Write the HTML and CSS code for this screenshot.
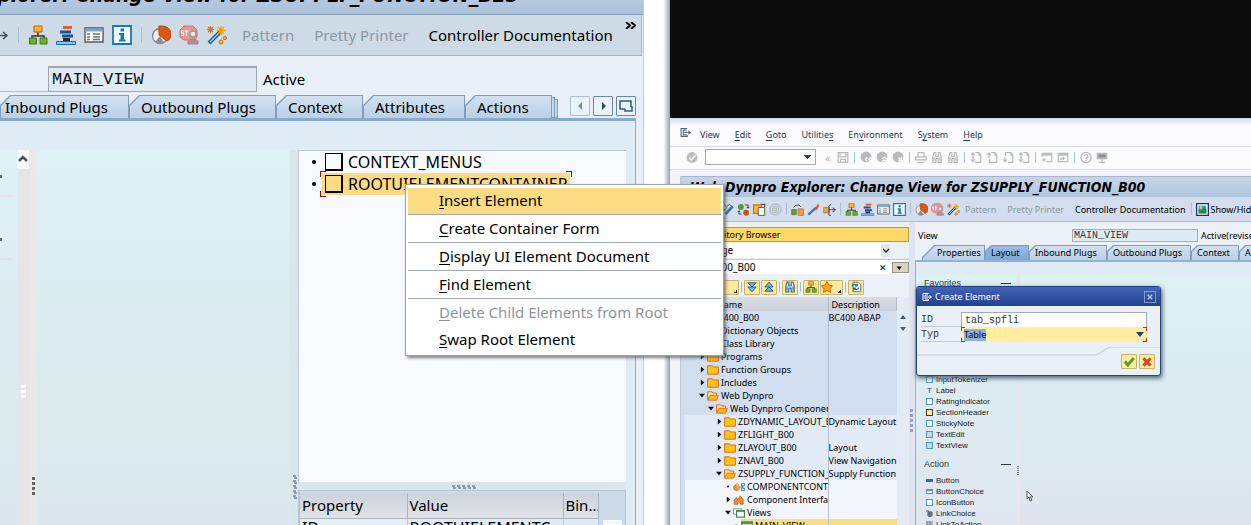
FILE: index.html
```html
<!DOCTYPE html>
<html lang="en">
<head>
<meta charset="utf-8">
<title>Web Dynpro Explorer</title>
<link rel="stylesheet" href="styles.css">
</head>
<body>
<svg class="sprite" aria-hidden="true">
  <symbol id="i-move" viewBox="0 0 20 20"><path d="M2 4h7v4M9 13v4H2M3 10.500h14M14 7l4 3.500-4 3.500M6 2l-3 3M6 18l-3-3" fill="none" stroke="#4c4f52" stroke-width="1.600"/></symbol>
  <symbol id="i-tree" viewBox="0 0 20 20"><path d="M10 6v5M4 14v-3h12v3" fill="none" stroke="#333" stroke-width="1.500"/><path d="M6 1h8v6H6z" fill="#ffb52e" stroke="#c2550f"/><path d="M1.500 13h7v6h-7zM12 13h7v6h-7z" fill="#6fae2f" stroke="#3c7a1c"/></symbol>
  <symbol id="i-steps" viewBox="0 0 20 20"><path d="M7 1h9v3H7z" fill="#df6524"/><path d="M4 5.500h11v3H4zM6 9.500h11v3H6z" fill="#1f4f96"/><path d="M7 13h7v3H7z" fill="#222b44"/><path d="M.5 16.500h19v3H.5z" fill="#8ec5e8" stroke="#1b6aa8"/></symbol>
  <symbol id="i-list" viewBox="0 0 20 20"><path d="M1 3h18v14H1z" fill="#fff" stroke="#55585a" stroke-width="1.400"/><path d="M1.500 3.500h17v3h-17z" fill="#78a7cf"/><path d="M3 9h3M3 12h3M3 14.500h3M9 9h7M9 12h7M9 14.500h7" stroke="#6e7276" stroke-width="1.300"/></symbol>
  <symbol id="i-info" viewBox="0 0 20 20"><path d="M1 1h18v18H1z" fill="#fff" stroke="#0a7cc0" stroke-width="1.800"/><path d="M8.500 3.500h3.500v3H8.500zM7 8h5v6.500h1.500V16.500H7v-2h1.500V10H7z" fill="#0a7cc0"/></symbol>
  <symbol id="i-pie" viewBox="0 0 20 20"><circle cx="9" cy="11" r="7.500" fill="#f0f0f0" stroke="#858585" stroke-width="1.300"/><path d="M9 11l-5 6a8 8 0 0 0 9 1z" fill="#8d8d8d"/><path d="M8 10V1q12-1 12 9 0 4-4 6z" fill="#df5515" stroke="#b04a17"/></symbol>
  <symbol id="i-stop" viewBox="0 0 20 20"><path d="M5 1h9l4 4v7l-4 3H5l-4-3V5z" fill="#e79494" stroke="#d46b6b"/><path d="M4.500 6H2.500v2h2v2.500h-2M5.500 6h4M7.500 6v5" stroke="#fff" stroke-width="1.200" fill="none"/><circle cx="14" cy="9" r="3" fill="#e7e7e7" stroke="#999" stroke-width="1.500"/><path d="M9 19v-3q5-4 10 0v3z" fill="#b98e8e" stroke="#9d8787"/></symbol>
  <symbol id="i-wand" viewBox="0 0 20 20"><path d="M2 18L13 7" stroke="#245f8e" stroke-width="4"/><path d="M3 17L12 8" stroke="#8fc8ec" stroke-width="1.500"/><path d="M1 2l5 5M6 2L1 7M3.500 1v7M0 4.500h7" stroke="#df6a1b" stroke-width="1.200"/><path d="M14 1v9M10 5.500h9M11 2l6 7M17 2l-6 7" stroke="#f0a21c" stroke-width="1.400"/><circle cx="14" cy="17" r="2" fill="#ffb31f" stroke="#ce7413"/><circle cx="18" cy="13" r="1.600" fill="#ffb31f" stroke="#ce7413"/></symbol>
  <symbol id="i-edit" viewBox="0 0 20 20"><path d="M1 5l4-3 4 5-3 4zM9 5l4-3 3 3" fill="none" stroke="#555" stroke-width="1.500"/><path d="M7 17L18 5" stroke="#2c78ad" stroke-width="4"/></symbol>
  <symbol id="i-swap" viewBox="0 0 20 20"><circle cx="6" cy="6" r="4.500" fill="#4e9a2c"/><circle cx="14" cy="15" r="4.500" fill="#d64a20"/><path d="M12 3h5v5M15 6l2 2 2-2M7 17H3v-5M1 14l2-2 2 2" stroke="#444" stroke-width="1.500" fill="none"/></symbol>
  <symbol id="i-copy" viewBox="0 0 20 20"><path d="M1 3h12v13H1z" fill="#ffbe31" stroke="#d06b18" stroke-width="2"/><path d="M8 7h10v12H8z" fill="#fff" stroke="#555" stroke-width="1.500"/><path d="M12 2h6v4" fill="none" stroke="#555" stroke-width="2"/></symbol>
  <symbol id="i-spiral" viewBox="0 0 20 20"><g fill="none" stroke="#a9adb3" stroke-width="1.500"><circle cx="10" cy="10" r="8.500"/><circle cx="10" cy="10" r="5"/><circle cx="10" cy="10" r="2"/></g></symbol>
  <symbol id="i-boxes" viewBox="0 0 20 20"><path d="M1 10h7v8H1z" fill="#5ea032" stroke="#397322"/><path d="M11 9h8v10h-8z" fill="#f4a13b" stroke="#b6531d"/><path d="M4 7q2-5 8-4l3 3" fill="none" stroke="#444" stroke-width="1.500"/></symbol>
  <symbol id="i-match" viewBox="0 0 20 20"><path d="M2 18L14 7" stroke="#3b78a8" stroke-width="3.500"/><path d="M12 9l5-8 2 3-4 7z" fill="#e7541b"/></symbol>
  <symbol id="i-split" viewBox="0 0 20 20"><path d="M1 7h9v8H1z" fill="#f8a234" stroke="#b85a1c"/><path d="M8 10.500h10M15 7l4 3.500-4 3.500M12 2l-3 3v13l3 2" fill="none" stroke="#555" stroke-width="1.600"/></symbol>
  <symbol id="i-exit" viewBox="0 0 20 20"><path d="M13 3H2v14h11v-3M6 6h6M6 6v8h6M8 10h10M15 7l4 3-4 3" fill="none" stroke="currentColor" stroke-width="2"/></symbol>
  <symbol id="i-ok" viewBox="0 0 20 20"><circle cx="10" cy="10" r="9" fill="currentColor"/><path d="M5 10l4 4 7-8" fill="none" stroke="#fff" stroke-width="2.500"/></symbol>
  <symbol id="i-save" viewBox="0 0 20 20"><path d="M2 2h16v16H2zM5 2v7h10V2M6 18v-5h8v5" fill="none" stroke="currentColor" stroke-width="2"/></symbol>
  <symbol id="i-back" viewBox="0 0 20 20"><circle cx="10" cy="9" r="9" fill="currentColor"/><path d="M12 10l-3 3 3 3M18 10l-3 3 3 3" fill="none" stroke="#fff" stroke-width="2"/></symbol>
  <symbol id="i-up" viewBox="0 0 20 20"><circle cx="10" cy="9" r="9" fill="currentColor"/><path d="M10 12l4-3 4 3M10 17l4-3 4 3" fill="none" stroke="#fff" stroke-width="2"/></symbol>
  <symbol id="i-cancel" viewBox="0 0 20 20"><circle cx="10" cy="9" r="9" fill="currentColor"/><path d="M11 10l6 7M17 10l-6 7" stroke="#fff" stroke-width="2.500"/></symbol>
  <symbol id="i-print" viewBox="0 0 20 20"><path d="M5 9V2h10v7M1 9h18v5H1zM4 18h12" fill="none" stroke="currentColor" stroke-width="2"/></symbol>
  <symbol id="i-find" viewBox="0 0 20 20"><path d="M3 18V9l2-7h3v6h4V2h3l2 7v9h-5v-6H8v6z" fill="#fff" stroke="currentColor" stroke-width="2"/><path d="M5 9v7M15 9v7" stroke="currentColor" stroke-width="2"/></symbol>
  <symbol id="i-page" viewBox="0 0 20 20"><path d="M9 2h6l3 4v12H8M15 2v4h3M5 3v12M2 6l3-4 3 4M2 13l3 4 3-4" fill="none" stroke="currentColor" stroke-width="2"/></symbol>
  <symbol id="i-pageup" viewBox="0 0 20 20"><path d="M9 2h6l3 4v12H6v-6M15 2v4h3M5 3v8M2 6l3-4 3 4" fill="none" stroke="currentColor" stroke-width="2"/></symbol>
  <symbol id="i-pagedn" viewBox="0 0 20 20"><path d="M6 8V2h9l3 4v12h-8M15 2v4h3M5 9v8M2 13l3 4 3-4" fill="none" stroke="currentColor" stroke-width="2"/></symbol>
  <symbol id="i-window" viewBox="0 0 20 20"><path d="M2 9V3h16v14H9" fill="none" stroke="currentColor" stroke-width="2"/><path d="M2 3h16v4H2z" fill="currentColor"/><path d="M2 14h6M5 11v6" stroke="currentColor" stroke-width="2"/></symbol>
  <symbol id="i-short" viewBox="0 0 20 20"><path d="M2 3h16v14H2z" fill="none" stroke="currentColor" stroke-width="2"/><path d="M2 3h16v4H2z" fill="currentColor"/><path d="M6 15q0-4 6-4M9 9l3 2-2 3" fill="none" stroke="currentColor" stroke-width="2"/></symbol>
  <symbol id="i-help" viewBox="0 0 20 20"><circle cx="10" cy="10" r="8.500" fill="none" stroke="currentColor" stroke-width="2"/><path d="M7 8q0-3 3-3t3 3q0 2-3 3v2M10 14v2" fill="none" stroke="currentColor" stroke-width="2"/></symbol>
  <symbol id="i-monitor" viewBox="0 0 20 20"><path d="M1 2h18v11H1z" fill="currentColor"/><path d="M4 5h12v5H4z" fill="#8b8f9c"/><path d="M10 13v4M5 18h10" stroke="currentColor" stroke-width="2"/></symbol>
  <symbol id="i-folder" viewBox="0 0 20 16"><path d="M1 1h8l2 2h8v12H1z" fill="#ffc50f" stroke="#e4651b" stroke-width="1.600"/></symbol>
  <symbol id="i-open" viewBox="0 0 20 16"><path d="M1 14V1h7l2 2h6v4" fill="#ffe08a" stroke="#e4651b" stroke-width="1.600"/><path d="M1 15l4-8h14l-3 8z" fill="#ffb91b" stroke="#e4651b" stroke-width="1.400"/></symbol>
  <symbol id="i-ctrl" viewBox="0 0 20 16"><circle cx="6" cy="9" r="5" fill="#f38d2e" stroke="#c65316"/><path d="M4 4l4-3 2 3v10" fill="#f7b260"/><path d="M14 2h5v4h-5zM14 10h5v4h-5zM12 8h4M16 6v4" stroke="#3878b0" stroke-width="1.600" fill="none"/></symbol>
  <symbol id="i-intf" viewBox="0 0 20 16"><path d="M2 15V8l4-4 2 4 4-7 5 6v8h-5v-4H8v4z" fill="#f38d2e" stroke="#c65316" stroke-width="1.300"/></symbol>
  <symbol id="i-views" viewBox="0 0 20 16"><path d="M1 1h13v9H1z" fill="#fff" stroke="#7c8b7b" stroke-width="1.500"/><path d="M6 4h13v11H6z" fill="#fff" stroke="#3c9145" stroke-width="2"/><path d="M6 5h13" stroke="#3c9145" stroke-width="2"/></symbol>
  <symbol id="i-view" viewBox="0 0 20 16"><path d="M1 1h18v15H1z" fill="#eef7e6" stroke="#4a9a3b" stroke-width="2"/><path d="M1 3h18" stroke="#4a9a3b" stroke-width="4"/><path d="M6 8h3M12 8h4M6 12h3M12 12h4" stroke="#4a9a3b" stroke-width="2"/></symbol>
  <symbol id="i-down2" viewBox="0 0 20 20"><path d="M3 3h14l-7 7zM3 10h14l-7 8z" fill="#72b4dc" stroke="#1a588b" stroke-width="1.500"/></symbol>
  <symbol id="i-up2" viewBox="0 0 20 20"><path d="M3 10h14l-7-8zM3 17h14l-7-7z" fill="#72b4dc" stroke="#1a588b" stroke-width="1.500"/></symbol>
  <symbol id="i-star" viewBox="0 0 20 20"><path d="M10 1l3 6 6 1-4 5 1 6-6-3-6 3 1-6-4-5 6-1z" fill="#ffab19" stroke="#d0540f" stroke-width="1.500"/></symbol>
  <symbol id="i-refresh" viewBox="0 0 20 20"><path d="M5 2h9l4 4v12H5z" fill="#fff" stroke="#55606a" stroke-width="1.500"/><path d="M3 9q4-6 9-1M12 4v4H8M15 11q-4 6-9 1M6 16v-4h4" fill="none" stroke="#1f6da6" stroke-width="2"/></symbol>
  <symbol id="i-chart" viewBox="0 0 20 20"><path d="M1 1h18v18H1z" fill="#fff" stroke="#1b3468" stroke-width="2"/><path d="M4 4h12v12H4z" fill="#3aa0c8"/><path d="M4 16V9l4 3 4-6 4 4v6z" fill="#2b8a3e"/><path d="M6 5h3v4H6z" fill="#f2d43c"/></symbol>
</svg>

<div class="desktop">
  <section class="win win-a">
    <div class="a-frame">
      <h1 class="a-title"><span>Explorer: Change View for ZSUPPLY_FUNCTION_B23</span></h1>
      <div class="a-tools">
        <svg class="ic"><use href="#i-move"/></svg><i class="sep"></i>
        <svg class="ic"><use href="#i-tree"/></svg>
        <svg class="ic"><use href="#i-steps"/></svg>
        <svg class="ic"><use href="#i-list"/></svg>
        <svg class="ic"><use href="#i-info"/></svg><i class="sep"></i>
        <svg class="ic"><use href="#i-pie"/></svg>
        <svg class="ic"><use href="#i-stop"/></svg>
        <svg class="ic"><use href="#i-wand"/></svg>
        <div class="a-links">
          <button class="link" disabled>Pattern</button>
          <button class="link" disabled>Pretty Printer</button>
          <button class="link">Controller Documentation</button>
        </div>
        <button class="more" aria-label="More"><svg viewBox="0 0 11 7"><path d="M1 0l4 3.500L1 7M6 0l4 3.500L6 7" fill="none" stroke="#000" stroke-width="2"/></svg></button>
      </div>
      <div class="a-field">
        <span class="rule"></span>
        <input class="mono" type="text" value="MAIN_VIEW" aria-label="View" readonly>
        <span>Active</span>
      </div>
      <div class="a-tabs">
        <button class="tab t1"><span>Inbound Plugs</span></button>
        <button class="tab t2"><span>Outbound Plugs</span></button>
        <button class="tab t3"><span>Context</span></button>
        <button class="tab t4"><span>Attributes</span></button>
        <button class="tab t5"><span>Actions</span></button>
        <i class="stack"></i><i class="stack"></i>
        <div class="navs">
          <button class="nav dim" aria-label="Previous"><svg viewBox="0 0 18 18"><path d="M11 5v8L7 9z" fill="#6f94bb"/></svg></button>
          <button class="nav" aria-label="Next"><svg viewBox="0 0 18 18"><path d="M8 5v8l4-4z" fill="#214c77"/></svg></button>
          <button class="nav" aria-label="List"><svg viewBox="0 0 18 18"><path d="M8 12H3V4h11v6M8 12v2h5M10 14h5V9" fill="none" stroke="#2d5c88" stroke-width="1.500"/></svg></button>
        </div>
      </div>
      <div class="a-panel">
        <div class="a-left"><i class="frag"></i><i class="frag"></i></div>
        <div class="a-scroll"><svg viewBox="0 0 12 19"><path d="M0 0h12v19H0z" fill="#f8f8f8"/><path d="M2 11l4-4 4 4" fill="none" stroke="#505355" stroke-width="2.500"/></svg><i class="grip"></i></div>
        <div class="a-strip"><i class="dots"></i></div>
        <div class="a-canvas"></div>
        <div class="a-split"><svg viewBox="0 0 4 25"><path d="M0 0h3v2h1v2H1V2H0zM0 5h3v2h1v2H1V7H0zM0 10h3v2h1v2H1v-2H0zM0 15h3v2h1v2H1v-2H0zM0 20h3v2h1v2H1v-2H0z" fill="#8d9aa8"/></svg></div>
        <div class="a-right">
          <ul class="ui-tree">
            <li><i class="bullet"></i><span class="node"><i class="box"></i>CONTEXT_MENUS</span></li>
            <li><i class="bullet"></i><span class="node on"><i class="box"></i>ROOTUIELEMENTCONTAINER</span></li>
          </ul>
          <div class="h-split"><svg viewBox="0 0 25 4"><path d="M0 0h3v2h1v2H1V2H0zM5 0h3v2h1v2H6V2H5zM10 0h3v2h1v2h-3V2h-1zM15 0h3v2h1v2h-3V2h-1zM20 0h3v2h1v2h-3V2h-1z" fill="#8d9aa8"/></svg></div>
          <div class="props">
            <table>
              <colgroup><col class="c-prop"><col class="c-val"><col></colgroup>
              <thead><tr><th>Property</th><th>Value</th><th>Bin...</th></tr></thead>
              <tbody><tr><td>ID</td><td>ROOTUIELEMENTC</td><td></td></tr></tbody>
            </table>
            <i class="thumb"></i>
          </div>
        </div>
      </div>
    </div>
  </section>

  <section class="win win-b">
    <div class="void"></div>
    <div class="b-frame">
      <nav class="b-menu">
        <svg class="ic m-ic"><use href="#i-exit"/></svg>
        <a href="#">View</a><a href="#"><u>E</u>dit</a><a href="#"><u>G</u>oto</a><a href="#">Utilitie<u>s</u></a><a href="#">En<u>v</u>ironment</a><a href="#">S<u>y</u>stem</a><a href="#"><u>H</u>elp</a>
      </nav>
      <div class="b-cmd">
        <svg class="ic"><use href="#i-ok"/></svg>
        <select aria-label="Command"><option></option></select>
        <span class="laquo">«</span>
        <svg class="ic"><use href="#i-save"/></svg><i class="sep"></i>
        <svg class="ic"><use href="#i-back"/></svg><svg class="ic"><use href="#i-up"/></svg><svg class="ic"><use href="#i-cancel"/></svg><i class="sep"></i>
        <svg class="ic"><use href="#i-print"/></svg><svg class="ic"><use href="#i-find"/></svg><svg class="ic"><use href="#i-find"/></svg><i class="sep"></i>
        <svg class="ic"><use href="#i-page"/></svg><svg class="ic"><use href="#i-pageup"/></svg><svg class="ic"><use href="#i-pagedn"/></svg><svg class="ic"><use href="#i-page"/></svg><i class="sep"></i>
        <svg class="ic"><use href="#i-window"/></svg><svg class="ic"><use href="#i-short"/></svg><i class="sep"></i>
        <svg class="ic"><use href="#i-help"/></svg><svg class="ic"><use href="#i-monitor"/></svg>
      </div>
      <div class="b-main">
        <h2 class="b-title">Web Dynpro Explorer: Change View for ZSUPPLY_FUNCTION_B00</h2>
        <div class="b-tools">
          <svg class="ic"><use href="#i-edit"/></svg><svg class="ic"><use href="#i-swap"/></svg><svg class="ic"><use href="#i-copy"/></svg><svg class="ic"><use href="#i-spiral"/></svg><i class="sep"></i>
          <svg class="ic"><use href="#i-boxes"/></svg><svg class="ic"><use href="#i-match"/></svg><svg class="ic"><use href="#i-split"/></svg><i class="sep"></i>
          <svg class="ic"><use href="#i-tree"/></svg><svg class="ic"><use href="#i-steps"/></svg><svg class="ic"><use href="#i-list"/></svg><svg class="ic"><use href="#i-info"/></svg><i class="sep"></i>
          <svg class="ic"><use href="#i-pie"/></svg><svg class="ic"><use href="#i-stop"/></svg><svg class="ic"><use href="#i-wand"/></svg>
          <div class="b-links">
            <button class="link" disabled>Pattern</button>
            <button class="link" disabled>Pretty Printer</button>
            <button class="link">Controller Documentation</button>
          </div>
          <i class="sep"></i>
          <button class="link show"><svg class="ic"><use href="#i-chart"/></svg>Show/Hide</button>
        </div>
        <div class="b-body">
          <aside class="repo">
            <div class="repo-head">Repository Browser</div>
            <div class="repo-kind"><select aria-label="Object type"><option>Package</option></select><svg viewBox="0 0 9 13"><path d="M0 0h9v13H0z" fill="#e1e6ed"/><path d="M2 5l3 3 3-3" fill="none" stroke="#222" stroke-width="1.300"/></svg></div>
            <div class="repo-name"><input type="text" value="BC400_B00" aria-label="Object"><span class="clr">✕</span><button class="drop" aria-label="History"><svg viewBox="0 0 17 11"><path d="M4 4h6l-3 4z" fill="#111"/></svg></button></div>
            <div class="repo-tools">
              <button class="yb wide" aria-label="Navigate"><i class="corner"></i></button><i class="sep"></i>
              <button class="yb" aria-label="Expand"><svg class="ic"><use href="#i-down2"/></svg></button>
              <button class="yb" aria-label="Collapse"><svg class="ic"><use href="#i-up2"/></svg></button><i class="sep"></i>
              <button class="yb blue" aria-label="Find"><svg class="ic"><use href="#i-find"/></svg></button><i class="sep"></i>
              <button class="yb" aria-label="Hierarchy"><svg class="ic"><use href="#i-tree"/></svg></button>
              <button class="yb star" aria-label="Favorites"><svg class="ic"><use href="#i-star"/></svg><i class="corner"></i></button><i class="sep"></i>
              <button class="yb" aria-label="Refresh"><svg class="ic"><use href="#i-refresh"/></svg></button>
            </div>
            <div class="repo-tree">
              <table>
                <colgroup><col class="c-name"><col></colgroup>
                <thead><tr><th>Object Name</th><th>Description</th></tr></thead>
                <tbody>
                  <tr class="l0"><td><div><i class="tw dn"></i><svg class="fd"><use href="#i-open"/></svg>BC400_B00</div></td><td>BC400 ABAP</td></tr>
                  <tr class="l1"><td><div><i class="tw"></i><svg class="fd"><use href="#i-folder"/></svg>Dictionary Objects</div></td><td></td></tr>
                  <tr class="l1"><td><div><i class="tw"></i><svg class="fd"><use href="#i-folder"/></svg>Class Library</div></td><td></td></tr>
                  <tr class="l1"><td><div><i class="tw"></i><svg class="fd"><use href="#i-folder"/></svg>Programs</div></td><td></td></tr>
                  <tr class="l1"><td><div><i class="tw"></i><svg class="fd"><use href="#i-folder"/></svg>Function Groups</div></td><td></td></tr>
                  <tr class="l1"><td><div><i class="tw"></i><svg class="fd"><use href="#i-folder"/></svg>Includes</div></td><td></td></tr>
                  <tr class="l1"><td><div><i class="tw dn"></i><svg class="fd"><use href="#i-open"/></svg>Web Dynpro</div></td><td></td></tr>
                  <tr class="l2"><td><div><i class="tw dn"></i><svg class="fd"><use href="#i-open"/></svg>Web Dynpro Components</div></td><td></td></tr>
                  <tr class="l3"><td><div><i class="tw"></i><svg class="fd"><use href="#i-folder"/></svg>ZDYNAMIC_LAYOUT_B00</div></td><td>Dynamic Layout</td></tr>
                  <tr class="l3"><td><div><i class="tw"></i><svg class="fd"><use href="#i-folder"/></svg>ZFLIGHT_B00</div></td><td></td></tr>
                  <tr class="l3"><td><div><i class="tw"></i><svg class="fd"><use href="#i-folder"/></svg>ZLAYOUT_B00</div></td><td>Layout</td></tr>
                  <tr class="l3"><td><div><i class="tw"></i><svg class="fd"><use href="#i-folder"/></svg>ZNAVI_B00</div></td><td>View Navigation</td></tr>
                  <tr class="l3"><td><div><i class="tw dn"></i><svg class="fd"><use href="#i-open"/></svg>ZSUPPLY_FUNCTION_B00</div></td><td>Supply Function</td></tr>
                  <tr class="l4"><td><div><i class="tw pt"></i><svg class="fd"><use href="#i-ctrl"/></svg>COMPONENTCONTROLLER</div></td><td></td></tr>
                  <tr class="l4"><td><div><i class="tw"></i><svg class="fd"><use href="#i-intf"/></svg>Component Interface</div></td><td></td></tr>
                  <tr class="l4"><td><div><i class="tw dn"></i><svg class="fd"><use href="#i-views"/></svg>Views</div></td><td></td></tr>
                  <tr class="l5"><td><div><i class="tw pt"></i><span class="pick"><svg class="fd"><use href="#i-view"/></svg>MAIN_VIEW</span></div></td><td class="pick"></td></tr>
                </tbody>
              </table>
              <div class="b-scroll"><svg viewBox="0 0 12 26"><path d="M3 9h6L6 5zM3 17h6l-3 4z" fill="#4b5b70"/></svg></div>
            </div>
          </aside>
          <div class="b-split"><svg viewBox="0 0 4 25"><path d="M0 0h3v3H0zM0 5h3v3H0zM0 10h3v3H0zM0 15h3v3H0zM0 20h3v3H0z" fill="#97a1b3"/></svg></div>
          <div class="editor">
            <div class="b-field"><label for="bview">View</label><input id="bview" class="mono" type="text" value="MAIN_VIEW" readonly><span>Active(revised)</span></div>
            <div class="b-tabs">
              <button class="tab u1"><span>Properties</span></button>
              <button class="tab u2 sel"><span>Layout</span></button>
              <button class="tab u3"><span>Inbound Plugs</span></button>
              <button class="tab u4"><span>Outbound Plugs</span></button>
              <button class="tab u5"><span>Context</span></button>
              <button class="tab u6"><span>Attributes</span></button>
            </div>
            <div class="b-panel">
              <div class="palette">
                <h3>Favorites<i></i></h3>
                <ul class="rest">
                  <li><i class="sq"></i>InputTokenizer</li>
                  <li><i class="gl">T</i>Label</li>
                  <li><i class="sq"></i>RatingIndicator</li>
                  <li><i class="sq sec"></i>SectionHeader</li>
                  <li><i class="sq"></i>StickyNote</li>
                  <li><i class="sq tx"></i>TextEdit</li>
                  <li><i class="sq tx"></i>TextView</li>
                </ul>
                <h3>Action<i></i></h3>
                <ul>
                  <li><i class="bar"></i>Button</li>
                  <li><i class="sq half"></i>ButtonChoice</li>
                  <li><i class="sq"></i>IconButton</li>
                  <li><svg class="lk" viewBox="0 0 7 7"><path d="M0 1h3M2 2h4v4H2zM2 4h4M4 2v5" fill="none" stroke="#3f4663"/></svg>LinkChoice</li>
                  <li><svg class="lk" viewBox="0 0 7 7"><path d="M0 1h7M0 3h7M1 0v4M4 0v4" fill="none" stroke="#7880a0"/></svg>LinkToAction</li>
                </ul>
              </div>
              <div class="p-split"><i></i></div>
              <div class="b-canvas"></div>
            </div>
          </div>
        </div>
      </div>
    </div>
  </section>

  <div class="ctx" role="menu">
    <button class="hot" role="menuitem"><u>I</u>nsert Element</button>
    <button role="menuitem"><u>C</u>reate Container Form</button>
    <button role="menuitem"><u>D</u>isplay UI Element Document</button>
    <button role="menuitem"><u>F</u>ind Element</button>
    <button class="plain" role="menuitem" disabled><u>D</u>elete Child Elements from Root</button>
    <button class="plain" role="menuitem"><u>S</u>wap Root Element</button>
  </div>

  <form class="dlg" role="dialog" aria-label="Create Element">
    <header><svg class="ic"><use href="#i-exit"/></svg><span>Create Element</span><button type="button" class="x" aria-label="Close"><svg viewBox="0 0 11 11"><path d="M3 3l5 5M8 3L3 8" stroke="#b9cbf2" stroke-width="1.500"/></svg></button></header>
    <div class="row"><label for="did">ID</label><input id="did" class="mono" type="text" value="tab_spfli"></div>
    <div class="row typ"><label for="dtyp">Typ</label><button type="button" id="dtyp" class="combo"><mark>Table</mark><svg viewBox="0 0 8 5"><path d="M0 0h8L4 5z" fill="#1f3f66"/></svg></button></div>
    <div class="foot">
      <svg class="curve" viewBox="0 0 242 10" preserveAspectRatio="none"><path d="M0 8h176q4 0 9-4t11-4h46" fill="none" stroke="#c3cbd6"/></svg>
      <div class="btns">
        <button type="button" class="yb" aria-label="Confirm"><svg class="ic" viewBox="0 0 20 20"><path d="M2 11l3-3 3 4 8-9 3 2L8 18z" fill="#58a632" stroke="#35761d"/></svg></button>
        <button type="button" class="yb" aria-label="Cancel"><svg class="ic" viewBox="0 0 20 20"><path d="M4 4l12 12M16 4L4 16" stroke="#d34a1c" stroke-width="5"/></svg></button>
      </div>
    </div>
  </form>

  <svg class="pointer" viewBox="0 0 8 12"><path d="M1 1v8l2-2 1 4 2-1-2-3h3z" fill="#fff" stroke="#555"/></svg>
</div>
</body>
</html>
```

FILE: styles.css
```css
* { box-sizing: border-box; }
body { margin: 0; height: 100vh; overflow: hidden; font: 15px/20px "Noto Sans", "Open Sans", sans-serif; color: #000; }
button, input, select { font: inherit; color: inherit; margin: 0; border: 0; padding: 0; background: none; border-radius: 0; }
button { text-align: left; white-space: nowrap; }
h1, h2, h3, ul { margin: 0; padding: 0; list-style: none; }
table { border-collapse: collapse; table-layout: fixed; width: 100%; }
th, td { padding: 0; text-align: left; font-weight: normal; white-space: nowrap; overflow: hidden; }
svg { display: block; flex: none; }
.sprite { display: none; }
.mono { font-family: "Liberation Mono", monospace; }

.desktop { position: relative; display: grid; grid-template-columns: 670fr 581fr; height: 100%; }
.win { min-width: 0; min-height: 0; overflow: hidden; }

/* left window */
.win-a { background: linear-gradient(to right, #fff 0 99%, #9aa2ab 100%); padding-right: 26px; }
.a-frame { display: flex; flex-direction: column; height: 100%; background: #e8eff7; border-right: 1px solid #c3cad3; }
.a-title { display: flex; justify-content: flex-end; align-items: flex-end; height: 15px; padding: 0 124px 6px 0; overflow: hidden; background: linear-gradient(#b3c9de, #a9c2d9); border-bottom: 1px solid #8ba3bc; font: italic bold 21px/26px "DejaVu Sans Condensed", "DejaVu Sans", sans-serif; white-space: nowrap; }
.a-tools { display: flex; align-items: center; gap: 8px; height: 41px; margin-right: 1px; background: #cedbe6; border: solid #a5b6c8; border-width: 0 1px 1px 0; }
.a-tools > .ic { width: 20px; height: 20px; }
.a-tools > .ic:first-child { margin-left: -11px; }
.sep { flex: none; width: 1px; height: 16px; background: #a9bdd2; }
.a-tools .sep { margin: 0 1px; }
.a-links { display: flex; gap: 20px; margin-left: 7px; }
.link:disabled { color: #8c98a4; }
.more { align-self: flex-start; margin: 7px 5px 0 auto; }
.more svg { width: 11px; height: 7px; }
.a-field { display: flex; align-items: flex-end; height: 36px; flex: none; }
.a-field .rule { width: 48px; border-bottom: 1px solid #b6bfc9; }
.a-field input { width: 209px; height: 26px; margin-right: 6px; padding-left: 3px; background: #dfeaf4; border: 1px solid #9fa7b0; border-top-width: 2px; font-size: 17px; color: #111; }
.a-field span:last-child { line-height: 25px; }
.a-tabs { display: flex; align-items: flex-end; flex: none; height: 26px; }
.tab { --cut: 10px; background: #7f9dbd; padding: 1px 1px 0 1px; clip-path: polygon(var(--cut) 0, 100% 0, 100% 100%, 0 100%, 0 var(--cut)); }
.tab span { display: block; padding-left: 11px; background: linear-gradient(#d2e1f0, #b9d0e6); clip-path: polygon(var(--cut) 0, 100% 0, 100% 100%, 0 100%, 0 var(--cut)); }
.a-tabs .tab { height: 23px; }
.a-tabs .tab span { height: 22px; line-height: 23px; }
.t1 { width: 129px; }
.a-tabs .t1 span { padding-left: 4px; }
.t2 { width: 147px; }
.t3 { width: 87px; }
.t4 { width: 102px; }
.t5 { width: 87px; }
.stack { width: 3px; height: 21px; background: #c5d8ea; border: 1px solid #7f9dbd; border-left: 0; }
.stack + .stack { height: 19px; }
.navs { display: flex; gap: 3px; margin: 0 7px 2px auto; }
.nav { width: 20px; height: 20px; border: 1px solid #6889ad; background: #eaf2fa; border-radius: 1px; }
.nav.dim { border-color: #a9bfd6; }
.a-panel { display: flex; flex: 1; min-height: 0; margin-right: 7px; padding: 29px 9px 0 0; border-top: 3px solid #86abd3; border-right: 1px solid #86abd3; background: #dfebf5; }
.a-left, .a-canvas { background: linear-gradient(#dcf1f4, #dceaee 70%, #dbe7ec); }
.a-left { width: 17px; padding-top: 25px; }
.frag { display: block; width: 12px; height: 22px; margin-bottom: 41px; border-bottom: 2px solid #e5e3e5; background: linear-gradient(#5f6a74, #5f6a74) 0 0 / 2px 3px no-repeat; }
.a-scroll { display: flex; flex-direction: column; width: 13px; background: #e5e5e5; }
.a-scroll svg { width: 12px; height: 19px; }
.grip { width: 5px; height: 13px; margin: 216px auto 0; background: repeating-linear-gradient(#fff 0 3px, transparent 3px 5px); }
.a-strip { width: 7px; background: #e9e9e9; padding: 327px 2px 0; }
.dots { display: block; width: 3px; height: 18px; background: repeating-linear-gradient(#666 0 3px, transparent 3px 5px); }
.a-canvas { flex: 1; }
.a-split { width: 8px; background: #dae5ec; padding: 325px 0 0 3px; }
.a-split svg, .b-split svg { width: 4px; height: 25px; }
.a-right { display: flex; flex-direction: column; width: 328px; }
.ui-tree { height: 332px; background: #f7faff; border: solid #bbc8d6; border-width: 1px 0 0 1px; flex: none; font-size: 16px; }
.ui-tree li { display: flex; align-items: center; height: 22px; }
.bullet { width: 4px; height: 4px; margin: 0 6px 0 13px; border-radius: 50%; background: #000; }
.node { position: relative; display: flex; align-items: center; gap: 5px; height: 22px; padding: 0 2px 0 3px; }
.node.on { background: #fcdc82; }
.node.on::before { content: ""; position: absolute; inset: -2px; background:
  linear-gradient(#a00 0 0) 0 0 / 6px 1px, linear-gradient(#a00 0 0) 0 0 / 1px 6px,
  linear-gradient(#a00 0 0) 100% 0 / 6px 1px, linear-gradient(#a00 0 0) 100% 0 / 1px 6px,
  linear-gradient(#a00 0 0) 0 100% / 6px 1px, linear-gradient(#a00 0 0) 0 100% / 1px 6px;
  background-repeat: no-repeat; }
.box { width: 18px; height: 18px; border: solid #000; border-width: 1px 2px 2px 1px; }
.h-split { flex: none; height: 8px; background: #dbe6ec; padding: 3px 0 0 154px; }
.h-split svg { width: 25px; height: 4px; }
.props { display: flex; flex: 1; min-height: 0; background: #ccdaea; border: solid #b5c3d2; border-width: 1px 1px 0 2px; padding-top: 2px; }
.props table { width: 299px; align-self: flex-start; font-size: 16px; }
.c-prop { width: 107px; }
.c-val { width: 156px; }
.props th { height: 25px; padding-left: 2px; border: solid #a9b3be; border-width: 0 1px 1px 0; background: linear-gradient(#ced3da, #dfe2e6); font-size: 15px; }
.props td { height: 25px; padding-left: 2px; border-right: 1px solid #bac7d5; background: #dfeaf5; vertical-align: top; line-height: 18px; }
.props td:first-child { background: #e6eef6; }
.thumb { width: 19px; margin: 27px 0 0 4px; background: #f4f6f9; border: 1px solid #fff; }

/* right window */
.win-b { display: flex; flex-direction: column; font-size: 9px; line-height: 13px; }
.void { flex: none; height: 118px; background: #0b0c0b; }
.b-frame { display: flex; flex-direction: column; flex: 1; min-height: 0; background: #f2f4fa; }
.b-menu { display: flex; align-items: center; flex: none; height: 29px; padding: 5px 0 0 10px; gap: 15px; background: linear-gradient(#cfdbec, #fcfcff 30%); border-bottom: 1px solid #d4d9e2; color: #243559; }
.b-menu a { color: inherit; text-decoration: none; }
.b-menu .m-ic { width: 11px; height: 11px; margin: -5px -6px 0 0; color: #5b6675; }
.b-cmd { display: flex; align-items: center; flex: none; gap: 4px; height: 23px; padding: 0 0 2px 16px; background: #fbfbfe; border-bottom: 1px solid #d8dce6; color: #b9bbc0; }
.b-cmd .ic { width: 12px; height: 13px; }
.b-cmd select { width: 111px; height: 16px; margin: 0 5px 0 3px; border: 1px solid #a5aab2; appearance: none; background: #fff conic-gradient(from -45deg at 50% 100%, #26406b 90deg, transparent 0) right 4px center / 7px 4px no-repeat; }
.laquo { width: 8px; font-size: 11px; }
.b-cmd .sep { height: 11px; margin: 0 1px; background: #a7c2dc; }
.b-main { display: flex; flex-direction: column; flex: 1; min-height: 0; margin: 6px 0 0 10px; border-left: 1px solid #c2cbdc; }
.b-title { flex: none; height: 21px; padding-left: 9px; background: linear-gradient(#c6d6e9, #b0c6de); border-top: 1px solid #a9b6c9; font: italic bold 14px/20px "DejaVu Sans Condensed", "DejaVu Sans", sans-serif; white-space: nowrap; overflow: hidden; }
.b-tools { display: flex; align-items: center; flex: none; gap: 3px; height: 25px; padding-left: 40px; background: #d3dded; border-bottom: 1px solid #b0bccf; white-space: nowrap; overflow: hidden; }
.b-tools .ic { width: 13px; height: 13px; }
.b-tools .sep { height: 12px; margin: 0 1px; }
.b-links { display: flex; gap: 11px; margin: 0 2px; }
.show { display: flex; align-items: center; gap: 1px; }
.b-body { display: flex; flex: 1; min-height: 0; background: #ecf1f8; }
.repo { display: flex; flex-direction: column; flex: none; width: 228px; padding-top: 5px; }
.repo-head { height: 15px; padding-left: 16px; border: 1px solid #b79b4a; background: #ffd965; line-height: 13px; }
.repo-kind { display: flex; align-items: center; width: 209px; height: 15px; margin-top: 1px; background: #fff; }
.repo-kind select { flex: 1; height: 15px; padding-left: 13px; appearance: none; font-size: 10px; line-height: 15px; }
.repo-kind svg { width: 9px; height: 13px; }
.repo-name { display: flex; align-items: center; height: 15px; margin-top: 1px; background: #fff; border-top: 1px solid #c3c8d0; }
.repo-name input { flex: 1; min-width: 0; padding-left: 22px; font-size: 10px; }
.clr { width: 13px; font-size: 9px; }
.drop { width: 17px; height: 11px; background: #d8d4c4; border: 1px solid #94938c; }
.repo-tools { display: flex; align-items: center; gap: 1px; height: 22px; padding: 4px 0 0 18px; margin-bottom: 1px; }
.yb { position: relative; display: grid; place-items: center; width: 16px; height: 15px; background: #ffeb9d; border: 1px solid #c7b46a; border-radius: 1px; }
.yb .ic { width: 12px; height: 12px; }
.wide { width: 40px; }
.star { width: 23px; justify-items: start; }
.blue { color: #35709f; }
.corner { position: absolute; right: 1px; bottom: 1px; width: 3px; height: 3px; background: linear-gradient(to bottom right, transparent 50%, #222 50%); }
.repo-tools .sep { height: 10px; margin: 0 1px; background: #b1b6bf; }
.repo-tree { display: flex; flex: 1; min-height: 0; overflow: hidden; }
.repo-tree table { width: 216px; flex: none; align-self: flex-start; }
.c-name { width: 147px; }
.repo-tree th { height: 14px; background: linear-gradient(#d9dce3, #ccd1da); padding-left: 3px; border-right: 1px solid #b4bbc6; }
.repo-tree th:first-child { padding-left: 6px; }
.repo-tree td { height: 13px; border-right: 1px solid #b4c1d3; background: #d1deef; line-height: 13px; }
.repo-tree td:last-child { border-right: 0; }
.repo-tree td > div { display: flex; align-items: center; gap: 2px; height: 13px; }
.fd { width: 12px; height: 10px; }
.tw { flex: none; width: 6px; height: 6px; background: #111; clip-path: polygon(30% 0, 90% 50%, 30% 100%); }
.tw.dn { clip-path: polygon(0 20%, 100% 20%, 50% 85%); }
.tw.pt { clip-path: circle(1px); }
.l0 div { padding-left: 9px; }
.l1 div { padding-left: 18px; }
.l2 div { padding-left: 27px; }
.l3 div { padding-left: 35px; }
.l4 div { padding-left: 44px; }
.l5 div { padding-left: 52px; }
.repo-tree .l3 td { background: #e1eaf6; }
.repo-tree .l4 td, .repo-tree .l5 td { background: #f2f6fc; }
.repo-tree .l3 td:first-child { background: linear-gradient(to right, #d1deef 4px, #e1eaf6 4px); }
.repo-tree .l4 td:first-child, .repo-tree .l5 td:first-child { background: linear-gradient(to right, #d1deef 4px, #f2f6fc 4px); }
span.pick { display: flex; align-items: center; gap: 2px; flex: 1; height: 13px; background: #fcdc82; }
.repo-tree .l5 td.pick { background: #fcdc82; }
.b-scroll { flex: 1; background: #e4ebf5; }
.b-scroll svg { width: 12px; height: 26px; margin-top: 13px; }
.b-split { flex: none; width: 6px; background: #dfe5f0; padding: 187px 0 0 1px; }
.editor { display: flex; flex-direction: column; flex: 1; min-width: 0; white-space: nowrap; }
.b-field { display: flex; align-items: center; flex: none; height: 20px; padding: 7px 0 0 3px; overflow: hidden; }
.b-field label { flex: none; width: 154px; border-bottom: 1px solid #c5ccd6; }
.b-field input { flex: none; width: 126px; height: 13px; margin-right: 3px; padding-left: 1px; background: #dfeaf4; border: 1px solid #a7adb6; font-size: 10px; color: #333; }
.b-tabs { display: flex; flex: none; height: 18px; padding: 3px 0 0 7px; overflow: hidden; }
.b-tabs .tab { --cut: 6px; flex: none; height: 15px; }
.b-tabs .tab span { height: 14px; line-height: 14px; padding-left: 5px; }
.b-tabs .u1 { --cut: 12px; width: 63px; }
.b-tabs .u1 span { padding-left: 14px; }
.u2 { width: 44px; }
.u3 { width: 78px; }
.u4 { width: 84px; }
.u5 { width: 48px; }
.u6 { width: 60px; }
.sel span { background: linear-gradient(#9cbbe0, #7fa8d6); }
.b-panel { display: flex; flex: 1; min-height: 0; border: solid #8fb2d9; border-width: 2px 0 0 1px; padding-top: 13px; background: #e0ebf6; }
.palette { flex: none; width: 101px; padding-left: 8px; background: linear-gradient(#dcf1f4, #dfe6ef); font: 8px/11px "Liberation Sans", Arial, sans-serif; color: #1b2026; }
.palette h3 { display: flex; justify-content: space-between; align-items: center; height: 16px; margin-right: 6px; font: inherit; font-size: 9px; color: #333b44; }
.palette h3 i { width: 10px; height: 1px; background: #333; }
.palette li { display: flex; align-items: center; gap: 3px; height: 11px; padding-left: 2px; }
.palette .rest { margin-top: 83px; }
.palette .rest + h3 { margin: 5px 6px 3px 0; }
.sq { width: 7px; height: 7px; border: 1px solid #5598b8; background: #f6fbfd; }
.sec { background: #ffe9a8; border-color: #54371d; }
.tx { background: #c5d9e2; }
.gl { width: 7px; font: bold 7px/9px "Liberation Sans", sans-serif; color: #1f7fb4; text-align: center; }
.bar { width: 7px; height: 3px; background: #2f6fae; }
.half { height: 5px; border-top-width: 2px; }
.lk { width: 7px; height: 7px; }
.p-split { flex: none; width: 3px; background: #ece4ea; padding-top: 191px; }
.p-split i { display: block; width: 2px; height: 9px; background: repeating-linear-gradient(#777 0 1px, transparent 1px 2px); }
.b-canvas { flex: 1; background: linear-gradient(#dcf1f4, #dde7ef 85%, #dfe3ec); }

/* floating layers */
.ctx { position: absolute; left: 405px; top: 184px; width: 319px; padding: 3px 2px 2px; background: #fff; border: 1px solid #a2a2a2; box-shadow: 2px 2px 3px #555b; }
.ctx button { display: block; width: 100%; height: 28px; padding: 0 0 2px 31px; border-bottom: 1px solid #9fa9b6; line-height: 24px; }
.ctx button.hot { background: #fbdc82; height: 27px; }
.ctx button.plain { height: 27px; border-bottom: 0; }
.ctx button:disabled { color: #8e959e; }
.ctx u, .b-menu u { text-underline-offset: 2px; }
.dlg { position: absolute; left: 916px; top: 286px; width: 245px; height: 90px; background: #eaf0f8; border: 1px solid #27437f; border-radius: 3px; box-shadow: 1px 2px 5px #456; font-size: 10px; line-height: 13px; overflow: hidden; }
.dlg header { display: flex; align-items: center; gap: 2px; height: 19px; padding: 0 4px; background: linear-gradient(#4364b8, #21408e); color: #fff; font-size: 9px; }
.dlg header .ic { width: 12px; height: 10px; }
.x { margin-left: auto; width: 12px; height: 12px; border: 1px solid #8199d3; }
.row { display: flex; height: 15px; padding: 0 13px 0 4px; }
.dlg header + .row { margin-top: 6px; }
.row label { width: 40px; padding-top: 1px; border-bottom: 1px solid #c4cbd5; font-family: "Liberation Mono", monospace; color: #333; }
.row input { flex: 1; min-width: 0; height: 15px; padding-left: 3px; background: #fff; border: 1px solid #a5abb5; border-bottom: 0; color: #333; }
.combo { display: flex; flex: 1; align-items: center; justify-content: space-between; padding: 0 3px; font-size: 9px; background:
  linear-gradient(#c22 0 0) 0 0 / 4px 1px, linear-gradient(#c22 0 0) 0 0 / 1px 4px,
  linear-gradient(#c22 0 0) 100% 0 / 4px 1px, linear-gradient(#c22 0 0) 100% 0 / 1px 4px,
  linear-gradient(#c22 0 0) 0 100% / 4px 1px, linear-gradient(#c22 0 0) 0 100% / 1px 4px,
  linear-gradient(#c22 0 0) 100% 100% / 4px 1px, linear-gradient(#c22 0 0) 100% 100% / 1px 4px, #ffeda0;
  background-repeat: no-repeat; }
.combo mark { background: #93afd6; line-height: 12px; }
.combo svg { width: 8px; height: 5px; }
.foot { margin-top: 5px; }
.curve { width: 100%; height: 10px; }
.btns { display: flex; justify-content: flex-end; gap: 2px; margin: -3px 5px 0 0; }
.pointer { position: absolute; left: 1026px; top: 490px; width: 8px; height: 12px; }
```
